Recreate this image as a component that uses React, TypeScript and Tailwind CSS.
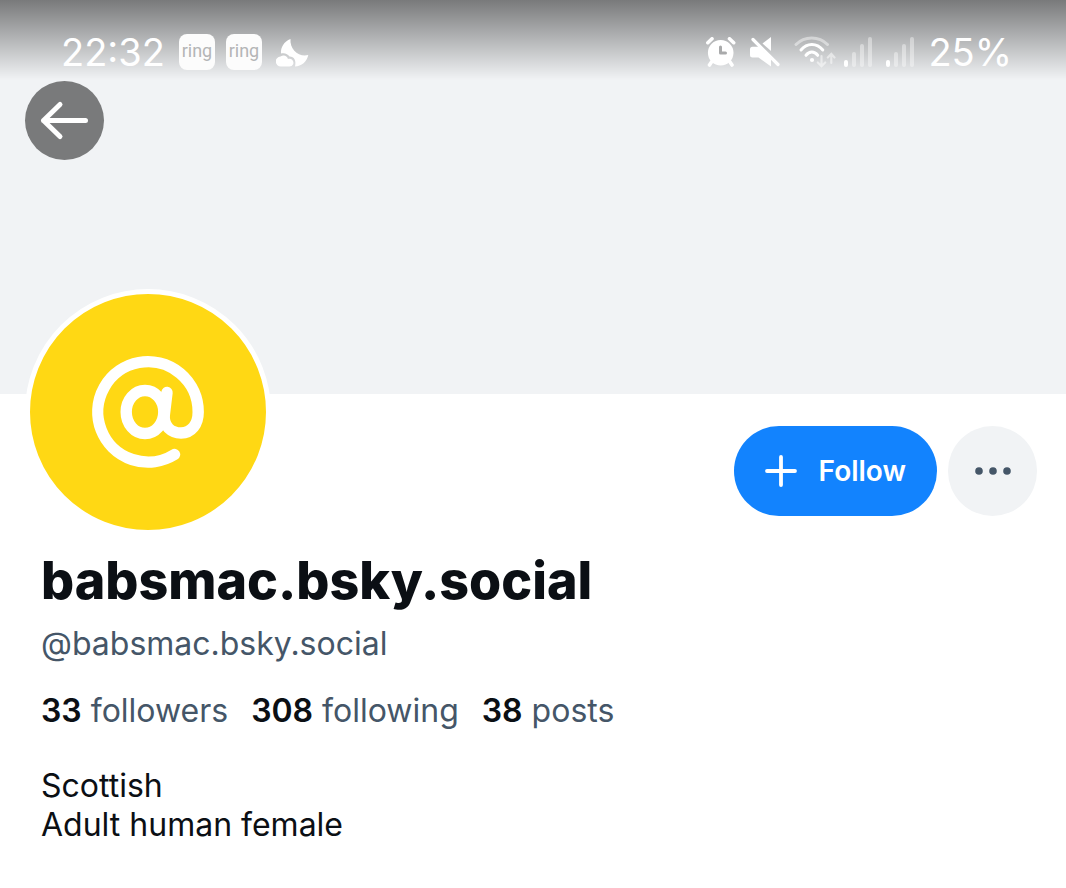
import React from "react";

const stats = [
  { count: 33, label: "followers" },
  { count: 308, label: "following" },
  { count: 38, label: "posts" },
];

const RingBadge = () => (
  <span className="flex h-9 w-9 items-center justify-center rounded-lg bg-[#fcfcfc] pb-0.5 font-[Roboto,sans-serif] text-lg leading-none text-[#b4b5b6]">
    ring
  </span>
);

const MoonIcon = () => (
  <svg width="33" height="29" viewBox="0 0 33 29" fill="#fff" aria-hidden="true">
    <path d="M14.5 1C8 3.500 4.500 9.500 5 15.500C8.500 14.500 12 16 13.500 18.600C18 18.500 20.500 22.500 19 28.500C25.500 28.500 31 23.500 32.300 17C23 19.500 13.500 11.500 14.500 1Z" />
    <path d="M5 28.500A5 5 0 0 1 4.500 18.500C8 16.500 11 18 12 21C16 20 18.500 23.500 17 26.500Q16 28.500 13.500 28.500Z" />
  </svg>
);

const AlarmIcon = () => (
  <svg width="30" height="30" viewBox="0 0 30 30" fill="none" strokeLinecap="round" aria-hidden="true">
    <circle cx="14.700" cy="15.700" r="12.800" fill="#fff" />
    <path d="M1.800 5.700 6 1.800M23.500 1.800 27.700 5.700M5.500 25 3.500 28M24 25 26 28" stroke="#fff" strokeWidth="3.600" />
    <path d="M14.500 10V16H19.500" stroke="#a9aaab" strokeWidth="3" strokeLinejoin="round" />
  </svg>
);

const MuteIcon = () => (
  <svg width="30" height="30" viewBox="0 0 30 30" fill="#fff" aria-hidden="true">
    <path d="M21 0V14L12.500 6.500Z" />
    <path d="M2.500 9.700H8.500L21 22V29.500L8.500 20.500H2.500Q0 20.500 0 18V12.200Q0 9.700 2.500 9.700Z" />
    <path d="M3 2.500 28 27.500" stroke="#fff" strokeWidth="3.200" strokeLinecap="round" />
  </svg>
);

const WifiIcon = () => (
  <svg width="42" height="32" viewBox="0 0 42 32" fill="none" stroke="#fff" strokeLinecap="round" strokeWidth="3" aria-hidden="true">
    <path d="M2 8.500C10.500-.2 25-.2 33.500 8.500" opacity=".45" />
    <path d="M7 14C13 6.500 22.700 6.500 28.800 14" />
    <path d="M12 19.300C15.500 15 20.200 15 23.700 19.300" />
    <circle cx="18" cy="24" r="2.100" fill="#fff" stroke="none" />
    <path d="M27.500 20V30M23.800 26.500 27.500 30.200 31.200 26.500M37.300 27V18M33.800 21.500 37.300 17.800 40.500 21.500" opacity=".5" strokeWidth="2.200" />
  </svg>
);

const SignalIcon = () => (
  <svg width="28" height="30" viewBox="0 0 28 30" fill="#fff" aria-hidden="true">
    <rect y="23" width="4" height="7" rx="2" />
    <g opacity=".4">
      <rect x="8" y="15" width="4" height="15" rx="2" />
      <rect x="16" y="7" width="4" height="23" rx="2" />
      <rect x="24" width="4" height="30" rx="2" />
    </g>
  </svg>
);

const StatusBar = () => (
  <div className="flex h-20 items-center justify-between bg-linear-to-b from-black/50 to-transparent pt-6 pr-[54px] pl-[61px] text-[38px] leading-none text-white">
    <div className="flex items-center gap-3.5">
      <span>22:32</span>
      <div className="flex items-center gap-[11px]">
        <RingBadge />
        <RingBadge />
      </div>
      <MoonIcon />
    </div>
    <div className="flex items-center gap-3.5">
      <AlarmIcon />
      <MuteIcon />
      <div className="flex items-center gap-2">
        <WifiIcon />
        <SignalIcon />
      </div>
      <SignalIcon />
      <span>25%</span>
    </div>
  </div>
);

const Avatar = () => (
  <div className="-mt-[105px] rounded-full border-[5px] border-white bg-[#ffd814]">
    <svg
      width="236"
      height="236"
      viewBox="0 0 236 236"
      fill="none"
      stroke="#fff"
      strokeWidth="11.400"
      strokeLinecap="round"
      role="img"
      aria-label="Avatar"
    >
      <ellipse cx="115" cy="118" rx="18.800" ry="21.500" />
      <path d="M137 98.500 134.300 121C133.300 132 141 139 151 139C161.500 139 168.200 130.500 168.200 118A50.200 50.200 0 1 0 144.500 160.500" />
    </svg>
  </div>
);

const App = () => {
  return (
    <main className="min-h-screen bg-white font-[Inter,sans-serif] text-[#0b0f14]">
      {/* Banner */}
      <header className="h-[394px] bg-[#f1f3f5]">
        <StatusBar />
        <button
          type="button"
          aria-label="Back"
          className="mt-px ml-[25px] block rounded-full bg-[#797a7b]"
        >
          <svg width="79" height="79" viewBox="0 0 79 79" fill="none" stroke="#fff" strokeWidth="5" strokeLinecap="round" strokeLinejoin="round">
            <path d="M60.500 39.500H18.500M35 23.500 18.500 39.500 35 55.500" />
          </svg>
        </button>
      </header>

      {/* Avatar and actions */}
      <div className="flex items-start justify-between pr-[29px] pl-[25px]">
        <Avatar />
        <div className="flex gap-[11px] pt-8">
          <button
            type="button"
            className="flex h-[90px] items-center gap-[22px] rounded-full bg-[#1283fe] px-[31px] text-[28px] font-semibold text-white"
          >
            <svg width="32" height="32" viewBox="0 0 32 32" stroke="#fff" strokeWidth="3.800" strokeLinecap="round" aria-hidden="true">
              <path d="M16 2V30M2 16H30" />
            </svg>
            Follow
          </button>
          <button
            type="button"
            aria-label="More options"
            className="flex h-[90px] w-[89px] items-center justify-center rounded-full bg-[#f1f3f5]"
          >
            <svg width="36" height="8" viewBox="0 0 36 8" fill="#455668">
              <circle cx="4" cy="4" r="3.800" />
              <circle cx="18" cy="4" r="3.800" />
              <circle cx="32" cy="4" r="3.800" />
            </svg>
          </button>
        </div>
      </div>

      {/* Profile details */}
      <section className="px-[41px] pt-4 pb-10 text-[32px] leading-10">
        <h1 className="text-[52px] leading-[60px] font-extrabold">
          babsmac.bsky.social
        </h1>
        <p className="mt-[13px] text-[#455668]">@babsmac.bsky.social</p>
        <div className="mt-[27px] flex gap-[23px]">
          {stats.map((stat) => (
            <a key={stat.label} href="#" className="text-[#455668]">
              <strong className="font-semibold text-[#0b0f14]">
                {stat.count}
              </strong>{" "}
              {stat.label}
            </a>
          ))}
        </div>
        <p className="mt-[35px] leading-[39px]">
          Scottish
          <br />
          Adult human female
        </p>
      </section>
    </main>
  );
};

export default App;
